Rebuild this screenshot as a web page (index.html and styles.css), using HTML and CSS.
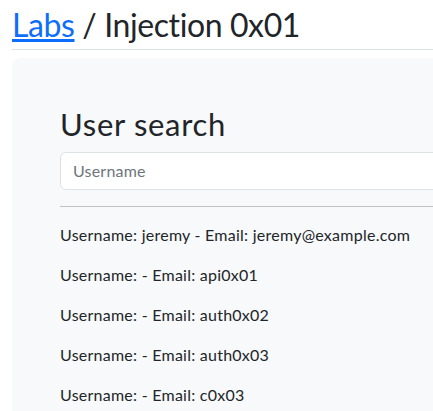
FILE: index.html
```html
<!DOCTYPE html>
<html lang="en">
<head>
<meta charset="utf-8">
<title>Injection 0x01</title>
<link rel="stylesheet" href="styles.css">
</head>
<body>
<div class="page">
  <header class="page-header">
    <h1 class="title"><a href="#" class="crumb">Labs</a> / Injection 0x01</h1>
  </header>
  <main class="panel">
    <h2 class="panel-title">User search</h2>
    <input class="field" type="text" placeholder="Username">
    <hr class="divider">
    <p class="row">Username: jeremy - Email: jeremy@example.com</p>
    <p class="row">Username: - Email: api0x01</p>
    <p class="row">Username: - Email: auth0x02</p>
    <p class="row">Username: - Email: auth0x03</p>
    <p class="row">Username: - Email: c0x03</p>
  </main>
</div>
</body>
</html>
```
FILE: styles.css
```css
* { box-sizing: border-box; }
html, body { margin: 0; padding: 0; overflow: hidden; height: 100%; }
body {
  font-family: Lato, "Noto Sans", sans-serif;
  font-size: 16px;
  line-height: 1.5;
  color: #212529;
  background: #fff;
}
.page {
  width: 640px;
  padding: 0 12px;
}
.page-header {
  border-bottom: 1px solid #dee2e6;
  padding: 6px 0 5px;
  margin-bottom: 8px;
}
.title {
  margin: 0;
  font-size: 32px;
  font-weight: 400;
  line-height: 1.2;
  letter-spacing: -0.4px;
}
.crumb { color: #0d6efd; text-decoration: underline; }
.panel {
  background: #f8f9fa;
  border-radius: 8px;
  padding: 48px;
}
.panel-title {
  margin: 0 0 8px;
  font-size: 31px;
  font-weight: 400;
  line-height: 1.2;
  letter-spacing: 0.7px;
}
.field {
  display: block;
  width: 100%;
  height: 38px;
  padding: 6px 12px;
  font: inherit;
  letter-spacing: 0.2px;
  color: #212529;
  background: #fff;
  border: 1px solid #dee2e6;
  border-radius: 6px;
}
.field::placeholder { color: #6c757d; }
.divider {
  margin: 16px 0;
  border: 0;
  border-top: 1px solid #bfc1c3;
}
.row { margin: 0 0 16px; letter-spacing: 0.25px; }
```
